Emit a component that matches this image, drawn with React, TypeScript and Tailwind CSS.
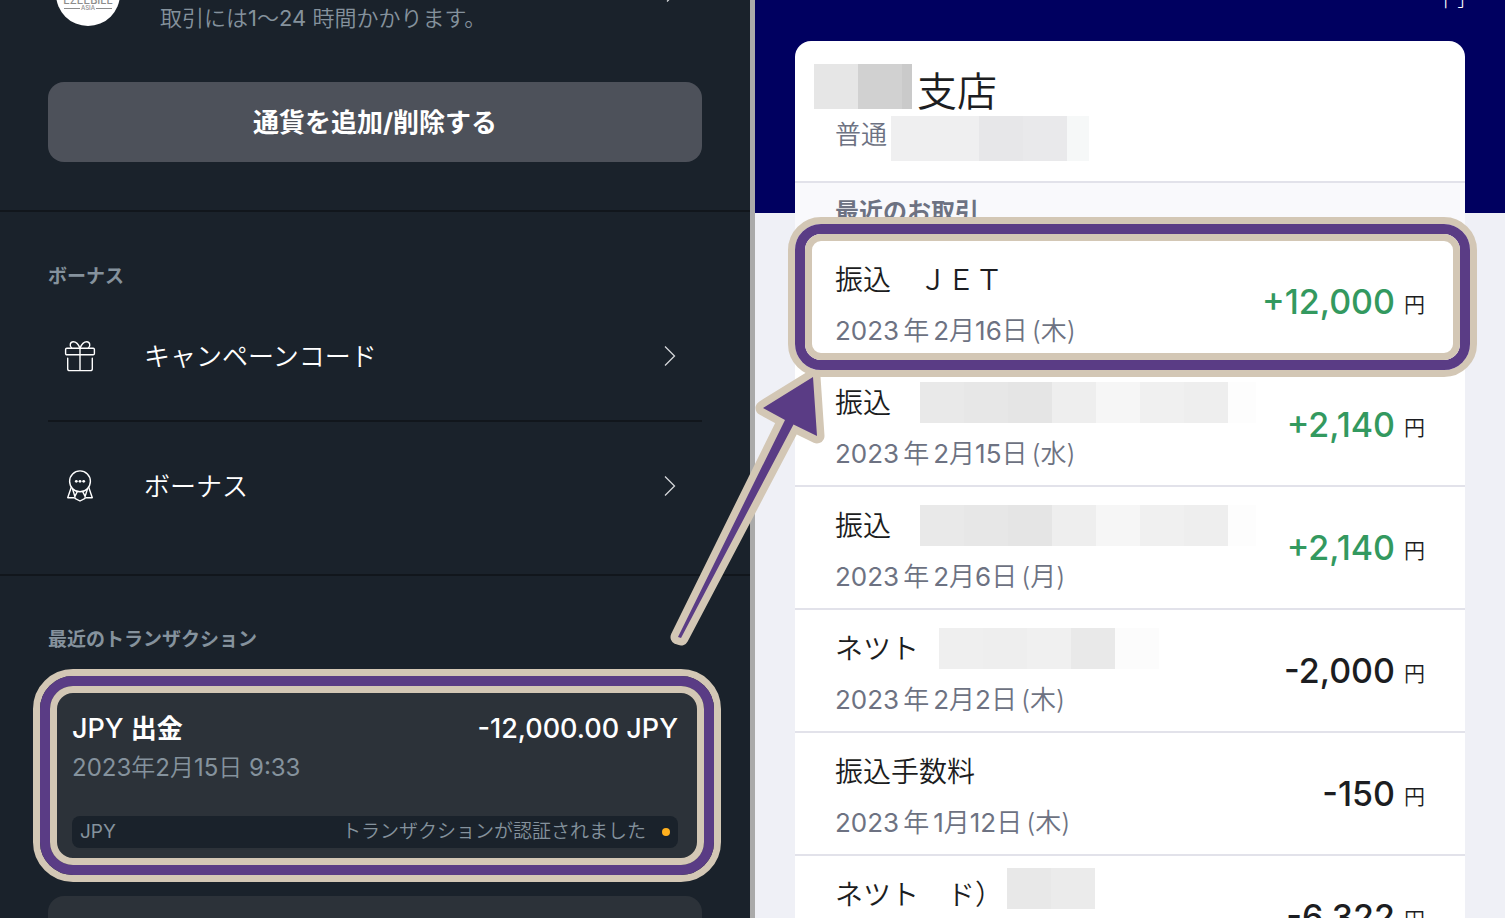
import React from "react";

type Transaction = {
  title: string;
  date: [string, string, string, string];
  amount: string;
  income?: boolean;
  masks?: string[];
  maskMargin?: string;
};

const longMask = [
  "w-11 bg-[#e9e9e9]",
  "w-11 bg-[#e7e7e7]",
  "w-11 bg-[#e5e5e5]",
  "w-11 bg-[#eeeeee]",
  "w-11 bg-[#f6f6f6]",
  "w-11 bg-[#f0f0f0]",
  "w-11 bg-[#eeeeee]",
  "w-7 bg-[#fdfdfd]",
];

const transactions: Transaction[] = [
  { title: "振込　ＪＥＴ", date: ["2023", "年", "2月16日", "(木)"], amount: "+12,000", income: true },
  { title: "振込　", date: ["2023", "年", "2月15日", "(水)"], amount: "+2,140", income: true, masks: longMask },
  { title: "振込　", date: ["2023", "年", "2月6日", "(月)"], amount: "+2,140", income: true, masks: longMask },
  {
    title: "ネツト",
    date: ["2023", "年", "2月2日", "(木)"],
    amount: "-2,000",
    masks: ["w-11 bg-[#efefef]", "w-11 bg-[#eeeeee]", "w-11 bg-[#f0f0f0]", "w-11 bg-[#e9e9e9]", "w-11 bg-[#fcfcfc]"],
    maskMargin: "ml-5",
  },
  { title: "振込手数料", date: ["2023", "年", "1月12日", "(木)"], amount: "-150" },
  {
    title: "ネツト　ド）",
    date: ["2023", "年", "1月12日", "(木)"],
    amount: "-6,322",
    masks: ["w-11 bg-[#e8e8e8]", "w-11 bg-[#ebebeb]"],
    maskMargin: "ml-1 -mt-3",
  },
];

/** Sets Latin letters and digits at regular weight beside the lighter Japanese glyphs. */
function MixedText({ text }: { text: string }) {
  return (
    <>
      {text.split(/([0-9A-Z:]+)/).map((part, i) =>
        i % 2 ? (
          <span key={i} className="font-normal">
            {part}
          </span>
        ) : (
          part
        ),
      )}
    </>
  );
}

function Chevron() {
  return (
    <svg className="h-5 w-3 shrink-0" viewBox="0 0 12 20" fill="none" stroke="#d5d7da" strokeWidth="1.3" aria-hidden="true">
      <path d="M1 0.5 10.5 10 1 19.5" />
    </svg>
  );
}

function GiftIcon() {
  return (
    <svg className="size-8 shrink-0" viewBox="0 0 32 32" fill="none" stroke="#fff" strokeWidth="1.4" strokeLinecap="round" strokeLinejoin="round" aria-hidden="true">
      <rect x="1.6" y="8.2" width="28.8" height="6.6" rx="1.2" />
      <path d="M3.7 18.3v10.4a1.9 1.9 0 0 0 1.9 1.9h20.8a1.9 1.9 0 0 0 1.9-1.9V18.3M16 8.2v22.4" />
      <path d="M15.8 8C14.6 4.6 12.2 1.7 9.2 1.7 6.3 1.7 5 5.6 7.6 8M16.2 8c1.2-3.4 3.6-6.3 6.6-6.3 2.9 0 4.2 3.9 1.6 6.3" />
    </svg>
  );
}

function RibbonIcon() {
  return (
    <svg className="size-8 shrink-0" viewBox="0 0 32 32" fill="none" stroke="#fff" strokeWidth="1.4" strokeLinejoin="round" aria-hidden="true">
      <circle cx="16" cy="11.3" r="10.4" />
      <path d="M7.3 17.2 3.7 27.7h6.6M24.7 17.2l3.6 10.5h-6.6" />
      <path d="M13.4 21.4 10.9 26.5v1.8L16 31l5.1-2.7v-1.8l-2.5-5.1M8.5 18.8l2.4 7.7M23.5 18.8l-2.4 7.7" />
      <g fill="#fff" stroke="none">
        <circle cx="12.3" cy="11.3" r="1.4" />
        <circle cx="16" cy="11.3" r="1.4" />
        <circle cx="19.7" cy="11.3" r="1.4" />
      </g>
    </svg>
  );
}

function HighlightFrame({ position, compact }: { position: string; compact?: boolean }) {
  return (
    <div
      aria-hidden="true"
      className={`pointer-events-none absolute z-10 border-[7px] border-[#d3c7b5] ${compact ? "rounded-[33px]" : "rounded-[40px]"} ${position}`}
    >
      <div className={`h-full border-[10px] border-[#5a3c85] ${compact ? "rounded-[26px]" : "rounded-[33px]"}`}>
        <div className={`h-full border-[7px] border-[#d3c7b5] ${compact ? "rounded-[16px]" : "rounded-[23px]"}`} />
      </div>
    </div>
  );
}

function Arrow() {
  const shape = "M153 17 103 48 125 60 18 277 21 278 133.5 64.5 157 76Z";
  return (
    <svg className="pointer-events-none absolute top-[360px] -left-[90px] z-20 h-[300px] w-[180px]" viewBox="0 0 180 300" aria-hidden="true">
      <path d={shape} fill="#d3c7b5" stroke="#d3c7b5" strokeWidth="15" strokeLinejoin="round" />
      <path d={shape} fill="#5a3c85" />
    </svg>
  );
}

function Mask({ blocks, className }: { blocks: string[]; className: string }) {
  return (
    <span className={`flex ${className}`} aria-hidden="true">
      {blocks.map((block, i) => (
        <span key={i} className={`h-full ${block}`} />
      ))}
    </span>
  );
}

function WalletPanel() {
  return (
    <section className="min-w-0 flex-1 bg-[#1a222b]">
      <div className="-mt-[38px] border-b-2 border-[#11161c] px-12 pb-12">
        <div className="flex h-16 pr-6 pl-2">
          <div className="flex size-16 shrink-0 flex-col items-center justify-end rounded-full bg-white pb-[15px] font-medium text-[#8c8c8c]">
            <span className="text-[11px] leading-[10px]">EZEEBILL</span>
            <span className="flex w-12 items-center gap-px text-[6px] leading-[6px]">
              <i className="h-px flex-1 bg-[#8c8c8c]" />
              ASIA
              <i className="h-px flex-1 bg-[#8c8c8c]" />
            </span>
          </div>
          <p className="ml-10 flex-1 self-end text-[22px] leading-4 font-[350] whitespace-nowrap text-[#85929d]">
            <MixedText text="取引には1〜24 時間かかります。" />
          </p>
          <span className="pt-5">
            <Chevron />
          </span>
        </div>
        <button type="button" className="mt-14 h-20 w-full rounded-2xl bg-[#4d515a] text-[26px] font-bold text-white">
          通貨を追加/削除する
        </button>
      </div>

      <div className="border-b-2 border-[#11161c] px-12 pt-[53px] pb-6">
        <h2 className="text-[19px] leading-6 font-bold text-[#85929d]">ボーナス</h2>
        <nav className="mt-[3px] text-[26px] font-[350] text-white">
          <a href="#campaign" className="flex h-[130px] items-center border-b-2 border-[#11161c] pr-[26px] pl-4">
            <GiftIcon />
            <span className="ml-12 flex-1">キャンペーンコード</span>
            <Chevron />
          </a>
          <a href="#bonus" className="flex h-32 items-center pr-[26px] pl-4">
            <RibbonIcon />
            <span className="ml-12 flex-1">ボーナス</span>
            <Chevron />
          </a>
        </nav>
      </div>

      <div className="px-12 pt-[52px]">
        <h2 className="text-[19px] leading-6 font-bold text-[#85929d]">最近のトランザクション</h2>
        <article className="relative mt-[22px] rounded-2xl bg-[#2c3239] px-6 pt-9 pb-6">
          <div className="flex justify-between text-[27px] leading-[38px] font-medium text-white">
            <span>
              JPY <span className="text-[26px] font-bold">出金</span>
            </span>
            <span>-12,000.00 JPY</span>
          </div>
          <p className="mt-[5px] text-2xl leading-[30px] font-[350] text-[#85929d]">
            <MixedText text="2023年2月15日 9:33" />
          </p>
          <div className="mt-[33px] flex h-8 items-center rounded-lg bg-[#1a222b] px-2 text-[19px] font-[350] text-[#85929d]">
            <span className="flex-1">
              <MixedText text="JPY" />
            </span>
            <span>トランザクションが認証されました</span>
            <i className="ml-4 size-2 rounded-full bg-[#ffb01e]" />
          </div>
          <HighlightFrame position="-top-[5px] -right-[19px] -bottom-[10px] -left-[15px]" />
        </article>
        <article className="mt-6 h-40 rounded-2xl bg-[#2c3239]" />
      </div>
    </section>
  );
}

function TransactionRow({ item, highlighted }: { item: Transaction; highlighted: boolean }) {
  return (
    <li className="relative flex items-center justify-between border-b-2 border-[#e2e2ea] bg-white px-10 pt-[18px] pb-4">
      <div>
        <div className="flex h-[41px] items-center text-[28px] font-[350] whitespace-pre text-[#1c1d21]">
          {item.title}
          {item.masks && <Mask blocks={item.masks} className={`h-[41px] ${item.maskMargin ?? "ml-px"}`} />}
        </div>
        <p className="mt-4 flex gap-1 text-[26px] leading-[30px] font-[350] text-[#6d7282]">
          {item.date.map((part) => (
            <span key={part}>
              <MixedText text={part} />
            </span>
          ))}
        </p>
      </div>
      <div className="flex items-center gap-[9px] pb-0.5">
        <strong className={`text-[34px] leading-10 font-medium ${item.income ? "text-[#33995f]" : "text-[#1c1d21]"}`}>{item.amount}</strong>
        <span className="pt-1.5 text-[21px] leading-7 font-[350] text-[#1c1d21]">円</span>
      </div>
      {highlighted && <HighlightFrame compact position="-top-6 -right-3 -bottom-[15px] -left-[7px]" />}
    </li>
  );
}

function BankPanel() {
  return (
    <section className="relative min-w-0 flex-1 bg-[#eff0f6]">
      <div className="absolute inset-x-0 top-0 h-[213px] bg-[#000060]" />
      <div className="relative px-10">
        <div className="flex h-[41px] items-start justify-end">
          <span className="-mt-[14px] text-[22px] leading-6 font-light text-white">円</span>
        </div>
        <div className="rounded-t-2xl bg-white">
          <header className="h-[142px] border-b-2 border-[#e2e2ea] pt-[23px]">
            <h1 className="ml-[19px] flex h-[52px] gap-[5px] text-[40px] leading-[56px] font-[350] text-[#1c1d21]">
              <Mask blocks={["w-11 bg-[#e6e6e6]", "w-11 bg-[#d1d1d1]", "w-[10px] bg-[#cacaca]"]} className="h-[45px]" />
              支店
            </h1>
            <div className="ml-10 flex h-[45px] gap-1 text-[26px] leading-[38px] font-[350] text-[#6d7282]">
              普通
              <Mask
                blocks={["w-[88px] bg-[#efeff0]", "w-11 bg-[#e7e7e9]", "w-11 bg-[#e9e9eb]", "w-[22px] bg-[#f6f8f8]"]}
                className="h-[45px]"
              />
            </div>
          </header>
          <h2 className="h-[58px] bg-[#f9f9fc] px-10 text-2xl leading-[58px] font-bold text-[#6d7282]">最近のお取引</h2>
          <ul>
            {transactions.map((item, i) => (
              <TransactionRow key={i} item={item} highlighted={i === 0} />
            ))}
          </ul>
        </div>
      </div>
    </section>
  );
}

export default function App() {
  return (
    <main className="flex h-screen overflow-hidden font-['Inter','Noto_Sans_CJK_JP',sans-serif]" lang="ja">
      <WalletPanel />
      <div className="relative w-[5px] shrink-0 bg-[#aaaaaa]">
        <Arrow />
      </div>
      <BankPanel />
    </main>
  );
}
